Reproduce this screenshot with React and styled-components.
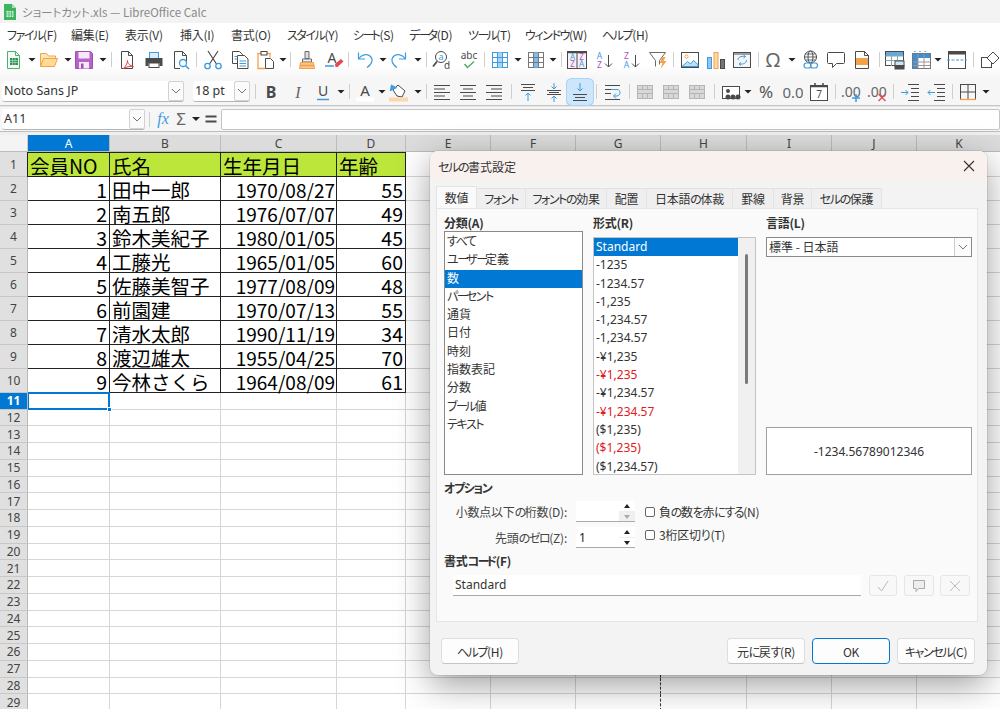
import React from "react";
import styled, { createGlobalStyle } from "styled-components";

const UI_FONT = `"Noto Sans CJK JP", "Noto Sans", sans-serif`;
const LATIN_FONT = `"Noto Sans", "Noto Sans CJK JP", sans-serif`;
const BLUE = "#3d9be0";
const ORANGE = "#f3a24a";
const PURPLE = "#b04fc4";
const DARK = "#4a4a4a";
const GREEN = "#4eb06d";
const RED = "#e5484d";

const GlobalStyle = createGlobalStyle`
  html, body { margin: 0; padding: 0; background: #fff; }
  * { box-sizing: border-box; }
`;

// ---- toolbar icons, drawn on a 20x20 box
const Svg = ({ children, size = 20 }) => (
  <svg width={size} height={size} viewBox="0 0 20 20" fill="none" strokeWidth="1">
    {children}
  </svg>
);

const Letter = ({ x, y, size = 9, color = DARK, weight = 400, children }) => (
  <text x={x} y={y} fontSize={size} fill={color} fontWeight={weight} fontFamily="Noto Sans, sans-serif" textAnchor="middle">
    {children}
  </text>
);

const Bars = ({ lines, color = DARK }) =>
  lines.map(([x1, x2, y], i) => <path key={i} d={`M${x1} ${y}H${x2}`} stroke={color} />);

const Cells = ({ fill, stroke = "#777" }) => (
  <>
    <rect x="2.5" y="2.5" width="15" height="15" fill="#fff" stroke={stroke} />
    <rect x="7.5" y="2.5" width="5" height="15" fill={fill} />
    <path d="M2.5 7.5h15M2.5 12.5h15M7.5 2.5v15M12.5 2.5v15" stroke={stroke} />
  </>
);

const Merge = () => (
  <>
    <rect x="2.5" y="3.5" width="15" height="13" fill="#d8d8d8" stroke="#b5b5b5" />
    <path d="M2.5 7.5h15M2.5 11.5h15M7.5 3.5v4M12.5 3.5v4M7.5 11.5v5M12.5 11.5v5" stroke="#b5b5b5" />
  </>
);

const icons = {
  new: (
    <Svg>
      <path d="M3.5 1.5h8l4 4v13h-12z" fill="#f2faf4" stroke={GREEN} />
      <path d="M11.5 1.5v4h4" stroke={GREEN} />
      <rect x="6" y="8" width="8" height="7" fill="#2f8f58" />
      <path d="M6 10.5h8M6 12.5h8M8.5 8v7M11 8v7" stroke="#bfe3cb" strokeWidth=".6" />
    </Svg>
  ),
  open: (
    <Svg>
      <path d="M1.5 16.5v-13h6l2 2.5h7v3" fill="#fde7b8" stroke={ORANGE} />
      <path d="M1.5 16.5l3-8h14l-3 8z" fill="#fddc97" stroke={ORANGE} />
    </Svg>
  ),
  save: (
    <Svg>
      <path d="M1.5 1.5h15l2 2v15h-17z" fill="#b763c9" stroke="#a14db4" />
      <rect x="4.5" y="2" width="11" height="6.5" fill="#f6e8f8" />
      <rect x="5" y="12" width="10" height="6.5" fill="#f6e8f8" />
      <rect x="7" y="13.5" width="2.5" height="5" fill="#a14db4" />
    </Svg>
  ),
  pdf: (
    <Svg>
      <path d="M4.5 1.5h7l4 4v13h-11z" fill="#fff" stroke={DARK} />
      <path d="M11.5 1.5v4h4" stroke={DARK} />
      <path d="M6.5 18.5c2-2 4-5 4-8 0 3 2 5 6 6-3-.5-6 0-10 2z" stroke="#e0413f" fill="none" />
    </Svg>
  ),
  print: (
    <Svg>
      <rect x="5.5" y="2.5" width="9" height="6" fill="#d9edfb" stroke={BLUE} />
      <path d="M1.5 8h17v8h-3v-3h-11v3h-3z" fill={DARK} />
      <rect x="5" y="13" width="10" height="4.5" fill="#fff" stroke={DARK} />
    </Svg>
  ),
  preview: (
    <Svg>
      <path d="M3.5 1.5h8l4 4v7M9 18.5h-5.500v-17" fill="#fff" stroke={DARK} />
      <path d="M11.5 1.5v4h4" stroke={DARK} />
      <circle cx="12" cy="13" r="3.500" fill="#fff" stroke={BLUE} strokeWidth="1.300" />
      <path d="M14.500 15.500l3.500 3.500" stroke={BLUE} strokeWidth="1.500" />
    </Svg>
  ),
  cut: (
    <Svg>
      <path d="M5 1l8.500 13M15 1l-8.500 13" stroke={DARK} strokeWidth="1.200" />
      <circle cx="4.500" cy="16" r="2.700" stroke={BLUE} strokeWidth="1.300" />
      <circle cx="15.500" cy="16" r="2.700" stroke={BLUE} strokeWidth="1.300" />
    </Svg>
  ),
  copy: (
    <Svg>
      <path d="M2.500 1.500h7l3 3v9h-10z" fill="#fff" stroke={DARK} />
      <path d="M7.500 5.500h7l3.500 3.500v9.500h-10.500z" fill="#fff" stroke={DARK} />
      <path d="M9.500 11h6.500M9.500 13.500h6.500M9.500 16h6.500M4.500 6.500h3M4.500 9h3" stroke={BLUE} />
    </Svg>
  ),
  paste: (
    <Svg>
      <path d="M5 3.500h-3v15h7" stroke={ORANGE} strokeWidth="1.300" />
      <path d="M11 3.500h3v4" stroke={ORANGE} strokeWidth="1.300" />
      <rect x="5" y="1.500" width="6" height="3.500" fill="#fff" stroke={DARK} />
      <path d="M9.500 8.500h5l3 3v7h-8z" fill="#fff" stroke={DARK} />
    </Svg>
  ),
  clone: (
    <Svg>
      <path d="M8 1.500h4v7h-4z" fill="#ddd" stroke="#6a6a6a" />
      <path d="M5.500 9h9v3h-9z" fill="#eee" stroke="#6a6a6a" />
      <path d="M3.500 12.500h13l1 6h-15z" fill="#f8c58d" stroke={ORANGE} />
      <path d="M3 15.500h14" stroke={ORANGE} strokeWidth="1.500" />
    </Svg>
  ),
  clear: (
    <Svg>
      <Letter x="8" y="13" size="14">A</Letter>
      <path d="M1 16h9" stroke={BLUE} strokeWidth="1.500" />
      <path d="M11 14l6-5 2.500 2.500-6 5.500h-2z" fill={RED} />
    </Svg>
  ),
  undo: (
    <Svg>
      <path d="M3.500 2.500v6.500h6.500" stroke={BLUE} strokeWidth="1.200" />
      <path d="M3.500 9c3-4.500 8-5.500 11.500-3 3.500 3 2.500 8-3 11.500" stroke={BLUE} strokeWidth="1.200" />
    </Svg>
  ),
  redo: (
    <Svg>
      <path d="M16.500 2.500v6.500h-6.500" stroke={BLUE} strokeWidth="1.200" />
      <path d="M16.500 9c-3-4.500-8-5.500-11.500-3-3.500 3-2.500 8 3 11.500" stroke={BLUE} strokeWidth="1.200" />
    </Svg>
  ),
  find: (
    <Svg>
      <circle cx="9" cy="7" r="5.500" fill="#fff" stroke={DARK} />
      <path d="M5 11.500l-4 5" stroke={DARK} strokeWidth="1.800" />
      <Letter x="9" y="10" size="9" color={BLUE}>a</Letter>
      <Letter x="15" y="19" size="10">d</Letter>
    </Svg>
  ),
  spell: (
    <Svg>
      <Letter x="10" y="9" size="10">abc</Letter>
      <path d="M5.500 14l3 3.500 6.500-6" stroke={GREEN} strokeWidth="1.500" />
    </Svg>
  ),
  tableA: <Svg><Cells fill="#a8d4f5" stroke={BLUE} /></Svg>,
  tableB: <Svg><Cells fill="#7fbdee" /></Svg>,
  sort: (
    <Svg>
      <rect x=".5" y="1.500" width="19" height="17" fill="#f3f3f3" stroke={DARK} />
      <path d="M.5 2.500h19" stroke={DARK} strokeWidth="1.500" />
      <path d="M10 2v16" stroke={DARK} />
      <Letter x="5.500" y="10" size="8" color={BLUE}>A</Letter>
      <Letter x="5.500" y="17" size="8" color={PURPLE}>Z</Letter>
      <Letter x="14.500" y="10" size="8" color={PURPLE}>Z</Letter>
      <Letter x="14.500" y="17" size="8" color={BLUE}>A</Letter>
    </Svg>
  ),
  az: (
    <Svg>
      <Letter x="5.500" y="9" size="8.500" color={BLUE}>A</Letter>
      <Letter x="5.500" y="18" size="8.500" color={PURPLE}>Z</Letter>
      <path d="M14.500 5v12M11 13.500l3.500 3.500 3.500-3.500" stroke={DARK} />
    </Svg>
  ),
  za: (
    <Svg>
      <Letter x="5.500" y="9" size="8.500" color={PURPLE}>Z</Letter>
      <Letter x="5.500" y="18" size="8.500" color={BLUE}>A</Letter>
      <path d="M14.500 5v12M11 13.500l3.500 3.500 3.500-3.500" stroke={DARK} />
    </Svg>
  ),
  filter: (
    <Svg>
      <path d="M1.500 2.500h16l-6 8v4M7.500 16.500v-6l-6-8" stroke="#6a6a6a" />
      <path d="M14.500 7l-3 6h3l-2 6 6-8h-3l2-4z" fill={ORANGE} />
    </Svg>
  ),
  image: (
    <Svg>
      <rect x="1.500" y="2.500" width="17" height="15" fill="#fff" stroke={DARK} />
      <circle cx="6.500" cy="6.500" r="1.600" stroke={ORANGE} />
      <path d="M2 16.500l5.500-5 3 2.500 3-3.500 4.500 4v2z" fill="#bde0f8" stroke={BLUE} />
    </Svg>
  ),
  chart: (
    <Svg>
      <rect x="1.500" y="7.500" width="4" height="11" fill="#8ec7f1" stroke={BLUE} />
      <rect x="8" y="2.500" width="4" height="16" fill="#fcd9a8" stroke={ORANGE} />
      <rect x="14.500" y="9.500" width="4" height="9" fill="#777" stroke={DARK} />
    </Svg>
  ),
  pivot: (
    <Svg>
      <rect x="1.500" y="2.500" width="17" height="15" fill="#f5f5f5" stroke={DARK} />
      <path d="M2 4h16" stroke={DARK} />
      <path d="M6 10c0-3 3-4 7-3.500M11.500 5l2 1.500-2 1.500M14.500 10c0 3-3 4.500-7 4M9 12.500l-2 1.500 2 1.500" stroke={BLUE} />
    </Svg>
  ),
  omega: (
    <Svg size={22}>
      <Letter x="10" y="17" size="20" color="#666">Ω</Letter>
    </Svg>
  ),
  link: (
    <Svg>
      <circle cx="9.500" cy="7" r="6" stroke={DARK} />
      <ellipse cx="9.500" cy="7" rx="2.500" ry="6" stroke={DARK} />
      <path d="M3.500 7h12M4.500 4h10M4.500 10h10" stroke={DARK} strokeWidth=".8" />
      <rect x="3" y="13" width="7" height="5" rx="2.500" fill="#fff" stroke={BLUE} strokeWidth="1.200" />
      <rect x="9.500" y="13" width="7" height="5" rx="2.500" stroke={BLUE} strokeWidth="1.200" />
    </Svg>
  ),
  comment: (
    <Svg>
      <path d="M2.500 2.500h15a1 1 0 0 1 1 1v9a1 1 0 0 1-1 1h-7l-4 4v-4h-4a1 1 0 0 1-1-1v-9a1 1 0 0 1 1-1z" fill="#fff" stroke={DARK} />
    </Svg>
  ),
  note: (
    <Svg>
      <path d="M3.500 1.500h9l4 4v13h-13z" fill="#fff" stroke={DARK} />
      <path d="M12.500 1.500v4h4" stroke={DARK} />
      <rect x="4" y="8" width="12" height="7" fill={ORANGE} />
    </Svg>
  ),
  printRange: (
    <Svg>
      <rect x=".5" y="1.500" width="18" height="14" fill="#fff" stroke={DARK} />
      <rect x="1" y="2" width="17" height="4" fill="#5ea9e6" />
      <path d="M.5 6h18M.5 10.500h18M6.500 2v14M12.500 2v14" stroke="#8aa" />
      <rect x="10" y="11" width="9" height="5" fill="#cfe6f8" stroke={DARK} />
      <rect x="9.500" y="15" width="10" height="4.500" fill={DARK} />
    </Svg>
  ),
  range: (
    <Svg>
      <rect x=".5" y="3.500" width="18" height="15" fill="#fff" stroke="#777" />
      <rect x="1" y="4" width="5" height="14" fill="#3f8fd6" />
      <rect x="1" y="4" width="17" height="4" fill="#3f8fd6" />
      <path d="M1 12h17M1 15.500h17M6 4v14M12 4v14" stroke="#999" />
      <path d="M3 1v2M8 1v2M13 1v2" stroke="#3f8fd6" strokeWidth="1.400" strokeDasharray="1 1" />
    </Svg>
  ),
  header: (
    <Svg>
      <rect x="1.500" y="1.500" width="17" height="17" fill="#fff" stroke={DARK} />
      <rect x="1.500" y="1.500" width="17" height="3" fill={DARK} />
      <path d="M0 10h20" stroke={BLUE} strokeDasharray="3 1.500" />
    </Svg>
  ),
  shapes: (
    <Svg>
      <rect x="1.500" y="7.500" width="10" height="10" fill="#fff" stroke={DARK} />
      <path d="M13 2l6 6-6 6-6-6z" fill="#fff" stroke={DARK} />
    </Svg>
  ),
  bold: <Svg><Letter x="10" y="15.500" size="16" weight="700">B</Letter></Svg>,
  italic: (
    <Svg>
      <text x="10" y="15.500" fontSize="16" fontStyle="italic" fill="#666" fontFamily="Liberation Serif, serif" textAnchor="middle">I</text>
    </Svg>
  ),
  under: (
    <Svg>
      <Letter x="10" y="14" size="14">U</Letter>
      <path d="M4 17.500h12" stroke={BLUE} strokeWidth="1.500" />
    </Svg>
  ),
  fontColor: (
    <Svg>
      <Letter x="10" y="13.500" size="15">A</Letter>
      <rect x="1" y="15.500" width="18" height="4" fill="#fff" />
    </Svg>
  ),
  back: (
    <Svg>
      <path d="M9 3l7 6-3 6-5-1-4-6z" fill="#fff" stroke={DARK} />
      <path d="M1.500 9l1-5.500 5 2.500" stroke={BLUE} strokeWidth="1.400" fill="#4a9fe0" />
      <rect x="0" y="15.500" width="19" height="4" fill="#fbd7ae" />
    </Svg>
  ),
  alignLeft: <Svg><Bars lines={[[2, 18, 3.500], [2, 13, 7], [2, 18, 10.500], [2, 13, 14], [2, 18, 17.500]]} /></Svg>,
  alignCenter: <Svg><Bars lines={[[2, 18, 3.500], [5, 15, 7], [2, 18, 10.500], [5, 15, 14], [2, 18, 17.500]]} /></Svg>,
  alignRight: <Svg><Bars lines={[[2, 18, 3.500], [7, 18, 7], [2, 18, 10.500], [7, 18, 14], [2, 18, 17.500]]} /></Svg>,
  vTop: (
    <Svg>
      <Bars lines={[[3, 17, 2.500], [5, 15, 5.500], [3, 17, 8.500]]} />
      <path d="M10 19v-8M7.500 13.500l2.500-2.500 2.500 2.500" stroke={BLUE} />
    </Svg>
  ),
  vCenter: (
    <Svg>
      <Bars lines={[[3, 17, 8.500], [5, 15, 10.500], [3, 17, 12.500]]} />
      <path d="M10 1v6M7.500 4.500l2.500 2.500 2.500-2.500M10 20v-6M7.500 16.500l2.500-2.500 2.500 2.500" stroke={BLUE} />
    </Svg>
  ),
  vBottom: (
    <Svg>
      <Bars lines={[[3, 17, 12.500], [5, 15, 15.500], [3, 17, 18.500]]} />
      <path d="M10 1v8M7.500 6.500l2.500 2.500 2.500-2.500" stroke={BLUE} />
    </Svg>
  ),
  wrap: (
    <Svg>
      <Bars lines={[[2, 17, 3.500], [2, 11, 7.500], [2, 8, 11.500], [2, 17, 17.500]]} />
      <path d="M8 7.500h6c4 0 4 6 0 6.500h-3M13 11.500l-2.500 2.500 2.500 2.500" stroke={BLUE} />
    </Svg>
  ),
  merge1: <Svg><Merge /></Svg>,
  merge2: <Svg><Merge /></Svg>,
  merge3: <Svg><Merge /></Svg>,
  numFormat: (
    <Svg>
      <rect x="1.500" y="4.500" width="17" height="12" fill="#fff" stroke={DARK} />
      <circle cx="7" cy="9" r="2" fill={DARK} />
      <circle cx="7" cy="15" r="2.500" fill={DARK} />
      <circle cx="12" cy="15" r="2.500" fill={DARK} />
      <circle cx="17" cy="15" r="2.500" fill={DARK} />
    </Svg>
  ),
  percent: <Svg><Letter x="10" y="16" size="17" color="#555">%</Letter></Svg>,
  decimal: <Svg><Letter x="10" y="16" size="15" color="#666">0.0</Letter></Svg>,
  date: (
    <Svg>
      <rect x="1.500" y="3.500" width="17" height="15" fill="#fff" stroke={DARK} />
      <path d="M1.500 4.500h17M6 1v3M14 1v3" stroke={DARK} strokeWidth="1.500" />
      <Letter x="10" y="16" size="10">7</Letter>
    </Svg>
  ),
  addDec: (
    <Svg>
      <Letter x="10" y="15" size="14" color="#666">.00</Letter>
      <path d="M15 12v8M11 16h8" stroke={BLUE} strokeWidth="1.500" />
    </Svg>
  ),
  delDec: (
    <Svg>
      <Letter x="10" y="15" size="14" color="#666">.00</Letter>
      <path d="M11.500 12l7 7M18.500 12l-7 7" stroke={RED} strokeWidth="1.300" />
    </Svg>
  ),
  indent: (
    <Svg>
      <Bars lines={[[8, 19, 2.500], [11, 19, 6.500], [11, 19, 10.500], [11, 19, 14.500], [8, 19, 18.500]]} />
      <path d="M1 10.500h7M5.500 8l2.500 2.500-2.500 2.500" stroke={BLUE} />
    </Svg>
  ),
  outdent: (
    <Svg>
      <Bars lines={[[8, 19, 2.500], [11, 19, 6.500], [11, 19, 10.500], [11, 19, 14.500], [8, 19, 18.500]]} />
      <path d="M9 10.500h-7M4.500 8l-2.500 2.500 2.500 2.500" stroke={BLUE} />
    </Svg>
  ),
  borders: (
    <Svg>
      <rect x="2.500" y="2.500" width="15" height="15" stroke={DARK} />
      <path d="M10 2.500v15M2.500 10h15" stroke={DARK} />
      <path d="M2 17.500h16" stroke={ORANGE} strokeWidth="1.300" />
    </Svg>
  ),
  lines: <Svg><Bars lines={[[12, 20, 3], [12, 20, 6], [12, 20, 9], [12, 20, 12], [12, 20, 15]]} color="#333" /></Svg>,
  fx: (
    <Svg>
      <text x="10" y="15" fontSize="16" fontStyle="italic" fill={BLUE} fontFamily="Liberation Serif, serif" textAnchor="middle">fx</text>
    </Svg>
  ),
  sum: <Svg><Letter x="10" y="16" size="17" color="#666">Σ</Letter></Svg>,
  equals: <Svg><path d="M4.500 7.500h11M4.500 12.500h11" stroke={DARK} strokeWidth="1.800" /></Svg>,
};

// ---- toolbar contents: [icon, centre x in the window]
const topTools = [
  ["new", 14], ["arrow", 32], ["open", 49], ["arrow", 68], ["save", 84], ["arrow", 103], ["sep", 111],
  ["pdf", 127], ["print", 154], ["preview", 181], ["sep", 196],
  ["cut", 213], ["copy", 240], ["paste", 266], ["arrow", 283], ["sep", 290],
  ["clone", 307], ["clear", 334], ["sep", 348],
  ["undo", 365], ["arrow", 383], ["redo", 399], ["arrow", 418], ["sep", 426],
  ["find", 442], ["spell", 469], ["sep", 484],
  ["tableA", 500], ["arrow", 518], ["tableB", 536], ["arrow", 553], ["sep", 561],
  ["sort", 577], ["az", 604], ["za", 631], ["filter", 658], ["sep", 673],
  ["image", 690], ["chart", 716], ["pivot", 742], ["sep", 758],
  ["omega", 773], ["arrow", 792], ["link", 811], ["comment", 836], ["note", 862], ["sep", 879],
  ["printRange", 895], ["range", 922], ["arrow", 938], ["header", 957], ["sep", 973], ["shapes", 990],
];

const formatTools = [
  ["sep", 255], ["bold", 271], ["italic", 298], ["under", 323], ["arrow", 341], ["sep", 349],
  ["fontColor", 365], ["arrow", 382], ["back", 399], ["arrow", 418], ["sep", 426],
  ["alignLeft", 442], ["alignCenter", 468], ["alignRight", 494], ["sep", 511],
  ["vTop", 528], ["vCenter", 554], ["vBottom", 580, true], ["sep", 596],
  ["wrap", 613], ["sep", 629],
  ["merge1", 645], ["merge2", 671], ["merge3", 697], ["sep", 714],
  ["numFormat", 731], ["arrow", 748], ["percent", 766], ["decimal", 793], ["date", 819], ["sep", 835],
  ["addDec", 851], ["delDec", 877], ["sep", 893],
  ["indent", 910], ["outdent", 936], ["sep", 952],
  ["borders", 968], ["arrow", 986], ["lines", 1002],
];

const formulaTools = [["sep", 149], ["fx", 163], ["sum", 181], ["arrow", 196], ["equals", 211]];

const Tools = ({ from, items }) => {
  let x = from;
  return items.map(([name, center, on], i) => {
    const width = name === "arrow" ? 8 : name === "sep" ? 1 : 20;
    const gap = center - width / 2 - x;
    x = center + width / 2;
    if (name === "arrow") return <DropArrow key={i} $gap={gap} />;
    if (name === "sep") return <ToolSep key={i} $gap={gap} />;
    return (
      <ToolButton key={i} $gap={gap} $on={on}>
        {icons[name]}
      </ToolButton>
    );
  });
};

const Chevron = () => (
  <svg width="10" height="6" viewBox="0 0 10 6" fill="none">
    <path d="M1 1l4 4 4-4" stroke="#777" />
  </svg>
);

// the window's UI font sets kana much tighter than Noto does
const Jp = ({ children }) =>
  children.split(/([ァ-ヶぁ-ん]+|ー+)/).map((part, i) => {
    if (i % 2 === 0) return part;
    return <Kana key={i} $long={part[0] === "ー"}>{part}</Kana>;
  });

// ---- sheet data
const COLUMNS = ["A", "B", "C", "D", "E", "F", "G", "H", "I", "J", "K"];
const people = [
  ["1", "田中一郎", "1970/08/27", "55"],
  ["2", "南五郎", "1976/07/07", "49"],
  ["3", "鈴木美紀子", "1980/01/05", "45"],
  ["4", "工藤光", "1965/01/05", "60"],
  ["5", "佐藤美智子", "1977/08/09", "48"],
  ["6", "前園建", "1970/07/13", "55"],
  ["7", "清水太郎", "1990/11/19", "34"],
  ["8", "渡辺雄太", "1955/04/25", "70"],
  ["9", "今林さくら", "1964/08/09", "61"],
];
const heading = ["会員NO", "氏名", "生年月日", "年齢"];
const EMPTY_RIGHT = COLUMNS.slice(4);

const menus = ["ファイル(F)", "編集(E)", "表示(V)", "挿入(I)", "書式(O)", "スタイル(Y)", "シート(S)", "データ(D)", "ツール(T)", "ウィンドウ(W)", "ヘルプ(H)"];
const menuWidths = [64, 54, 55, 51, 56, 66, 56, 59, 57, 77, 60];

const tabs = [
  ["数値", 41], ["フォント", 49], ["フォントの効果", 81], ["配置", 40],
  ["日本語の体裁", 86], ["罫線", 41], ["背景", 38], ["セルの保護", 70],
];

const categories = ["すべて", "ユーザー定義", "数", "パーセント", "通貨", "日付", "時刻", "指数表記", "分数", "ブール値", "テキスト"];

const formats = [
  ["Standard"], ["-1235"], ["-1234.57"], ["-1,235"], ["-1,234.57"], ["-1,234.57"],
  ["-¥1,235"], ["-¥1,235", true], ["-¥1,234.57"], ["-¥1,234.57", true],
  ["($1,235)"], ["($1,235)", true], ["($1,234.57)"],
];

const App = () => (
  <Screen>
    <GlobalStyle />
    <TitleBar>
      <svg width="14" height="16" viewBox="0 0 14 16">
        <path d="M1 0h8l4 4v12H1z" fill="#3fb45f" />
        <path d="M9 0l4 4H9z" fill="#a8e0b8" />
        <rect x="3.500" y="7" width="7" height="6" fill="#d9f2e0" />
        <path d="M3.500 9h7M3.500 11h7M6 7v6M8.500 7v6" stroke="#3fb45f" strokeWidth=".7" />
      </svg>
      <TitleText>ショートカット.xls — LibreOffice Calc</TitleText>
    </TitleBar>
    <MenuBar>
      {menus.map((m, i) => (
        <MenuItem key={m} $w={menuWidths[i]}><Jp>{m}</Jp></MenuItem>
      ))}
    </MenuBar>
    <TopToolbar>
      <Tools from={0} items={topTools} />
    </TopToolbar>
    <FormatToolbar>
      <Combo $w={182}>
        <ComboText>Noto Sans JP</ComboText>
        <ComboButton><Chevron /></ComboButton>
      </Combo>
      <Combo $w={57} $gap={9}>
        <ComboText>18 pt</ComboText>
        <ComboButton><Chevron /></ComboButton>
      </Combo>
      <Tools from={250} items={formatTools} />
    </FormatToolbar>
    <FormulaBar>
      <Combo $w={143}>
        <ComboText>A11</ComboText>
        <ComboButton><Chevron /></ComboButton>
      </Combo>
      <Tools from={145} items={formulaTools} />
      <FormulaInput />
    </FormulaBar>

    <Sheet>
      <Corner />
      {COLUMNS.map((c, i) => (
        <ColHead key={c} $active={i === 0}>{c}</ColHead>
      ))}

      <RowHead>1</RowHead>
      {heading.map((h) => (
        <DataCell key={h} $head>{h}</DataCell>
      ))}
      {EMPTY_RIGHT.map((c) => <Blank key={c} />)}

      {people.map((p, i) => (
        <React.Fragment key={p[0]}>
          <RowHead>{i + 2}</RowHead>
          <DataCell $right>{p[0]}</DataCell>
          <DataCell>{p[1]}</DataCell>
          <DataCell $right $date>{p[2]}</DataCell>
          <DataCell $right>{p[3]}</DataCell>
          {EMPTY_RIGHT.map((c) => <Blank key={c} />)}
        </React.Fragment>
      ))}

      {Array.from({ length: 19 }, (_, i) => i + 11).map((row) => (
        <React.Fragment key={row}>
          <RowHead $active={row === 11}>{row}</RowHead>
          {COLUMNS.map((c) =>
            row === 11 && c === "A" ? (
              <Selected key={c}><Handle /></Selected>
            ) : (
              <Blank key={c} $page={c === "G"} />
            )
          )}
        </React.Fragment>
      ))}
    </Sheet>

    <Dialog>
      <DialogTitle>
        <span><Jp>セルの書式設定</Jp></span>
        <svg width="12" height="12" viewBox="0 0 12 12" fill="none">
          <path d="M1 1l10 10M11 1L1 11" stroke="#333" strokeWidth="1.100" />
        </svg>
      </DialogTitle>
      <TabRow>
        {tabs.map(([t, w], i) => (
          <Tab key={t} $w={w} $active={i === 0}><Jp>{t}</Jp></Tab>
        ))}
      </TabRow>
      <Panel>
        <Columns>
          <Column>
            <GroupLabel>分類(A)</GroupLabel>
            <ListBox $h={244}>
              {categories.map((c, i) => (
                <ListRow key={c} $selected={i === 2}><Jp>{c}</Jp></ListRow>
              ))}
            </ListBox>
          </Column>
          <Column>
            <GroupLabel $after={6}>形式(R)</GroupLabel>
            <FormatList>
              <FormatRows>
                {formats.map(([f, red], i) => (
                  <ListRow key={i} $selected={i === 0} $red={red}>{f}</ListRow>
                ))}
              </FormatRows>
              <ScrollTrack><ScrollThumb /></ScrollTrack>
            </FormatList>
          </Column>
          <Column>
            <GroupLabel $after={6}>言語(L)</GroupLabel>
            <LangSelect>
              <span>標準 - 日本語</span>
              <LangButton><Chevron /></LangButton>
            </LangSelect>
            <Preview>-1234.56789012346</Preview>
          </Column>
        </Columns>

        <GroupLabel $before={5}><Jp>オプション</Jp></GroupLabel>
        <OptionRow>
          <OptionLabel><Jp>小数点以下の桁数(D):</Jp></OptionLabel>
          <Spin>
            <SpinValue />
            <SpinButtons>
              <SpinUp />
              <SpinDown $off />
            </SpinButtons>
          </Spin>
          <Check><CheckBox /><span><Jp>負の数を赤にする(N)</Jp></span></Check>
        </OptionRow>
        <OptionRow>
          <OptionLabel><Jp>先頭のゼロ(Z):</Jp></OptionLabel>
          <Spin>
            <SpinValue>1</SpinValue>
            <SpinButtons>
              <SpinUp />
              <SpinDown />
            </SpinButtons>
          </Spin>
          <Check $raise><CheckBox /><span>3桁区切り(T)</span></Check>
        </OptionRow>

        <GroupLabel $before={5}><Jp>書式コード(F)</Jp></GroupLabel>
        <CodeRow>
          <CodeInput>Standard</CodeInput>
          <CodeButton $w={28} $gap={8}>
            <svg width="14" height="14" viewBox="0 0 14 14" fill="none"><path d="M2 8l3.500 4L12 2" stroke="#bbb" /></svg>
          </CodeButton>
          <CodeButton $w={30} $gap={7}>
            <svg width="14" height="14" viewBox="0 0 14 14" fill="none"><path d="M1.500 1.500h11v8h-6l-2.500 3v-3h-2.500z" stroke="#aaa" fill="#eee" /></svg>
          </CodeButton>
          <CodeButton $w={30} $gap={6}>
            <svg width="12" height="12" viewBox="0 0 12 12" fill="none"><path d="M1 1l10 10M11 1L1 11" stroke="#bbb" /></svg>
          </CodeButton>
        </CodeRow>
      </Panel>
      <Footer>
        <PushButton><Jp>ヘルプ(H)</Jp></PushButton>
        <FooterRight>
          <PushButton><Jp>元に戻す(R)</Jp></PushButton>
          <PushButton $primary>OK</PushButton>
          <PushButton><Jp>キャンセル(C)</Jp></PushButton>
        </FooterRight>
      </Footer>
    </Dialog>
  </Screen>
);

const Screen = styled.div`
  position: relative;
  width: 1000px;
  height: 709px;
  overflow: hidden;
  background: #fff;
  font-family: ${UI_FONT};
  font-feature-settings: "palt";
  color: #222;
`;

const Kana = styled.span`
  letter-spacing: ${(p) => (p.$long ? -3 : -1.4)}px;
`;

const TitleBar = styled.div`
  height: 23px;
  display: flex;
  align-items: center;
  gap: 5px;
  padding-left: 3px;
  background: #f3f3f3;
`;

const TitleText = styled.span`
  font-size: 11.5px;
  color: #8a8a8a;
`;

const MenuBar = styled.div`
  height: 23px;
  display: flex;
  align-items: center;
  padding-left: 7px;
  background: #fff;
`;

const MenuItem = styled.span`
  width: ${(p) => p.$w}px;
  flex: none;
  font-size: 12px;
  letter-spacing: -0.25px;
  color: #333;
  white-space: nowrap;
`;

const TopToolbar = styled.div`
  height: 32px;
  display: flex;
  align-items: center;
  padding-bottom: 5px;
  background: linear-gradient(#fff 60%, #f6f6f6);
`;

const FormatToolbar = styled.div`
  height: 28px;
  display: flex;
  align-items: center;
  padding-left: 2px;
  background: #f6f6f6;
  border-bottom: 1px solid #c6c6c6;
`;

const FormulaBar = styled.div`
  height: 26px;
  display: flex;
  align-items: center;
  padding-left: 2px;
  background: #f6f6f6;
  border-top: 1px solid #e6e6e6;
  border-bottom: 1px solid #bdbdbd;
`;

const ToolButton = styled.div`
  flex: none;
  width: 20px;
  height: 20px;
  margin-left: ${(p) => p.$gap}px;
  display: flex;
  align-items: center;
  justify-content: center;
  ${(p) =>
    p.$on &&
    `
    background: #cde6fb;
    border-radius: 2px;
    box-shadow: 0 0 0 3px #cde6fb, 0 0 0 4px #a8d5f7;
  `}
`;

const DropArrow = styled.div`
  flex: none;
  width: 8px;
  height: 4px;
  margin-left: ${(p) => p.$gap}px;
  background: #222;
  clip-path: polygon(0 0, 100% 0, 50% 100%);
`;

const ToolSep = styled.div`
  flex: none;
  width: 1px;
  height: 15px;
  margin-left: ${(p) => p.$gap}px;
  background: #cfcfcf;
`;

const Combo = styled.div`
  flex: none;
  width: ${(p) => p.$w}px;
  height: 21px;
  margin-left: ${(p) => p.$gap || 0}px;
  display: flex;
  align-items: stretch;
  background: #fff;
  border-bottom: 1px solid #b5b5b5;
  border-radius: 3px;
`;

const ComboText = styled.span`
  flex: 1;
  padding-left: 2px;
  font-family: ${LATIN_FONT};
  font-size: 12.5px;
  line-height: 20px;
  color: #333;
`;

const ComboButton = styled.span`
  flex: none;
  width: 16px;
  display: flex;
  align-items: center;
  justify-content: center;
  background: #fbfbfb;
  border: 1px solid #d2d2d2;
  border-radius: 2px;
`;

const FormulaInput = styled.div`
  flex: 1;
  height: 21px;
  margin-left: 0;
  background: #fff;
  border: 1px solid #c4c4c4;
  border-radius: 2px;
`;

const Sheet = styled.div`
  display: grid;
  margin-top: 3px;
  grid-template-columns: 28px 82px 111px 116px 69px 85px 85px 85px 86px 85px 85px 85px;
  grid-template-rows: 17px 25px repeat(9, 24px) 16.500px repeat(18, 16.750px);
  width: 1002px;
  background: #fff;
  box-shadow: 0 -3px 0 #efefef;
`;

const Corner = styled.div`
  background: #f4f4f4;
  border-right: 1px solid #ccc;
  border-bottom: 1px solid #bbb;
`;

const ColHead = styled.div`
  display: flex;
  align-items: center;
  justify-content: center;
  font-family: ${LATIN_FONT};
  font-size: 12px;
  color: ${(p) => (p.$active ? "#fff" : "#444")};
  background: ${(p) => (p.$active ? "#0078d4" : "#dcdcdc")};
  border-right: 1px solid #bcbcbc;
  border-bottom: 1px solid #bbb;
`;

const RowHead = styled.div`
  display: flex;
  align-items: center;
  justify-content: center;
  font-family: ${LATIN_FONT};
  font-size: 12px;
  line-height: 15px;
  font-weight: ${(p) => (p.$active ? 700 : 400)};
  color: ${(p) => (p.$active ? "#fff" : "#444")};
  background: ${(p) => (p.$active ? "#0078d4" : "#e0e0e0")};
  border-right: 1px solid #b8b8b8;
  border-bottom: 1px solid #c8c8c8;
`;

const Blank = styled.div`
  border-right: 1px ${(p) => (p.$page ? "dashed #333" : "solid #d6d6d6")};
  border-bottom: 1px solid #d6d6d6;
`;

const DataCell = styled.div`
  display: flex;
  align-items: center;
  justify-content: ${(p) => (p.$right ? "flex-end" : "flex-start")};
  padding: 2px ${(p) => (p.$date ? 1 : 2)}px 0 2px;
  font-size: ${(p) => (p.$date ? 19 : 19.5)}px;
  line-height: 21px;
  white-space: nowrap;
  color: #000;
  background: ${(p) => (p.$head ? "#bde63b" : "#fff")};
  border-right: 1px solid #222;
  border-bottom: 1px solid #222;
  font-feature-settings: normal;
  ${(p) => p.$head && "border-top: 1px solid #222; border-left: 1px solid #222; margin-left: -1px;"}
`;

const Selected = styled.div`
  position: relative;
  margin-top: -1px;
  border: 2px solid #0078d4;
  border-left-width: 1px;
`;

const Handle = styled.span`
  position: absolute;
  right: -4px;
  bottom: -4px;
  width: 5px;
  height: 5px;
  background: #0078d4;
  border: 1px solid #fff;
`;

const Dialog = styled.div`
  position: absolute;
  left: 430px;
  top: 151px;
  width: 557px;
  height: 524px;
  display: flex;
  flex-direction: column;
  background: #f3f3f3;
  border-radius: 8px;
  box-shadow: 0 10px 34px rgba(0, 0, 0, 0.38), 0 0 0 1px rgba(0, 0, 0, 0.08);
  overflow: hidden;
`;

const DialogTitle = styled.div`
  flex: none;
  height: 30px;
  display: flex;
  align-items: center;
  justify-content: space-between;
  padding: 0 12px 0 8px;
  background: #f9f1ee;
  font-size: 12px;
  color: #333;
`;

const TabRow = styled.div`
  flex: none;
  height: 27px;
  display: flex;
  align-items: flex-end;
  padding: 6px 0 0 6px;
`;

const Tab = styled.div`
  width: ${(p) => p.$w}px;
  height: ${(p) => (p.$active ? 22 : 20)}px;
  display: flex;
  align-items: center;
  justify-content: center;
  font-size: 12px;
  letter-spacing: -0.25px;
  color: #333;
  background: ${(p) => (p.$active ? "#fafafa" : "#efefef")};
  border: 1px solid #e3e3e3;
  border-bottom: none;
  border-left-width: ${(p) => (p.$active ? 1 : 0)}px;
  white-space: nowrap;
`;

const Panel = styled.div`
  flex: none;
  width: 542px;
  height: 414px;
  margin-left: 6px;
  padding: 6px 7px 0 7px;
  background: #fafafa;
  border: 1px solid #e6e6e6;
`;

const Columns = styled.div`
  display: flex;
  gap: 10px;
`;

const Column = styled.div`
  display: flex;
  flex-direction: column;
`;

const GroupLabel = styled.div`
  height: 16px;
  margin-top: ${(p) => p.$before || 0}px;
  margin-bottom: ${(p) => p.$after || 0}px;
  font-size: 12px;
  line-height: 15px;
  font-weight: 700;
  letter-spacing: -0.25px;
  color: #333;
`;

const ListBox = styled.div`
  width: 139px;
  height: ${(p) => p.$h}px;
  padding-top: 1px;
  background: #fff;
  border: 1px solid #8a8a8a;
  overflow: hidden;
`;

const ListRow = styled.div`
  height: 18.300px;
  padding-left: 2px;
  font-family: ${LATIN_FONT};
  font-size: 12px;
  line-height: 18.300px;
  white-space: nowrap;
  background: ${(p) => (p.$selected ? "#0078d4" : "transparent")};
  color: ${(p) => (p.$selected ? "#fff" : p.$red ? "#e02020" : "#333")};
`;

const FormatList = styled.div`
  width: 163px;
  height: 238px;
  display: flex;
  background: #fff;
  border: 1px solid #c4c4c4;
  overflow: hidden;
`;

const FormatRows = styled.div`
  flex: 1;
  overflow: hidden;
`;

const ScrollTrack = styled.div`
  position: relative;
  flex: none;
  width: 17px;
  background: #f0f0f0;
`;

const ScrollThumb = styled.div`
  position: absolute;
  left: 7px;
  top: 16px;
  width: 3px;
  height: 130px;
  border-radius: 2px;
  background: #7a7a7a;
`;

const LangSelect = styled.div`
  width: 206px;
  height: 20px;
  display: flex;
  align-items: stretch;
  justify-content: space-between;
  padding-left: 2px;
  background: #fff;
  border: 1px solid #8a8a8a;
  font-size: 12px;
  line-height: 18px;
  color: #333;
`;

const LangButton = styled.span`
  width: 17px;
  display: flex;
  align-items: center;
  justify-content: center;
  background: #fbfbfb;
  border-left: 1px solid #ccc;
`;

const Preview = styled.div`
  width: 206px;
  height: 48px;
  margin-top: 170px;
  display: flex;
  align-items: center;
  justify-content: center;
  background: #fff;
  border: 1px solid #a0a0a0;
  font-family: ${LATIN_FONT};
  font-size: 12px;
  color: #333;
`;

const OptionRow = styled.div`
  height: 21px;
  margin-top: 5px;
  display: flex;
  align-items: center;
`;

const OptionLabel = styled.span`
  width: 123px;
  text-align: right;
  font-size: 12px;
  letter-spacing: -0.25px;
  color: #444;
  white-space: nowrap;
`;

const Spin = styled.div`
  width: 59px;
  height: 21px;
  margin-left: 9px;
  display: flex;
  background: #fff;
  border-bottom: 1px solid #aaa;
`;

const SpinValue = styled.span`
  flex: 1;
  padding-left: 3px;
  font-family: ${LATIN_FONT};
  font-size: 12px;
  line-height: 21px;
`;

const SpinButtons = styled.div`
  flex: none;
  width: 16px;
  display: flex;
  flex-direction: column;
  background: #eee;
  gap: 1px;
`;

const SpinUp = styled.span`
  flex: 1;
  background: #fff;
  position: relative;
  &::after {
    content: "";
    position: absolute;
    left: 5px;
    top: 3px;
    border: 3px solid transparent;
    border-top: none;
    border-bottom: 4px solid #222;
  }
`;

const SpinDown = styled.span`
  flex: 1;
  background: ${(p) => (p.$off ? "#f0f0f0" : "#fff")};
  position: relative;
  &::after {
    content: "";
    position: absolute;
    left: 5px;
    top: 3px;
    border: 3px solid transparent;
    border-bottom: none;
    border-top: 4px solid ${(p) => (p.$off ? "#aaa" : "#222")};
  }
`;

const Check = styled.label`
  display: flex;
  align-items: center;
  gap: 4px;
  margin-left: 10px;
  margin-bottom: ${(p) => (p.$raise ? 6 : 0)}px;
  font-size: 12px;
  letter-spacing: -0.25px;
  color: #333;
  white-space: nowrap;
`;

const CheckBox = styled.span`
  flex: none;
  width: 10px;
  height: 10px;
  background: #fff;
  border: 1px solid #666;
  border-radius: 2px;
`;

const CodeRow = styled.div`
  display: flex;
  margin-top: 6px;
  padding-left: 9px;
`;

const CodeInput = styled.div`
  width: 410px;
  height: 21px;
  padding-left: 2px;
  background: #fff;
  border-bottom: 1px solid #aaa;
  font-family: ${LATIN_FONT};
  font-size: 12px;
  line-height: 20px;
  color: #333;
`;

const CodeButton = styled.div`
  width: ${(p) => p.$w}px;
  height: 21px;
  margin-left: ${(p) => p.$gap}px;
  display: flex;
  align-items: center;
  justify-content: center;
  background: #f8f8f8;
  border: 1px solid #e6e6e6;
  border-radius: 3px;
`;

const Footer = styled.div`
  flex: 1;
  display: flex;
  align-items: flex-start;
  justify-content: space-between;
  padding: 16px 12px 0 11px;
`;

const FooterRight = styled.div`
  display: flex;
  gap: 7px;
`;

const PushButton = styled.div`
  width: 78px;
  height: 26px;
  display: flex;
  align-items: center;
  justify-content: center;
  font-size: 12px;
  letter-spacing: -0.25px;
  color: #333;
  background: #fdfdfd;
  border: 1px solid ${(p) => (p.$primary ? "#0078d4" : "#dedede")};
  border-bottom-color: ${(p) => (p.$primary ? "#0078d4" : "#c4c4c4")};
  border-radius: 4px;
`;

export default App;
